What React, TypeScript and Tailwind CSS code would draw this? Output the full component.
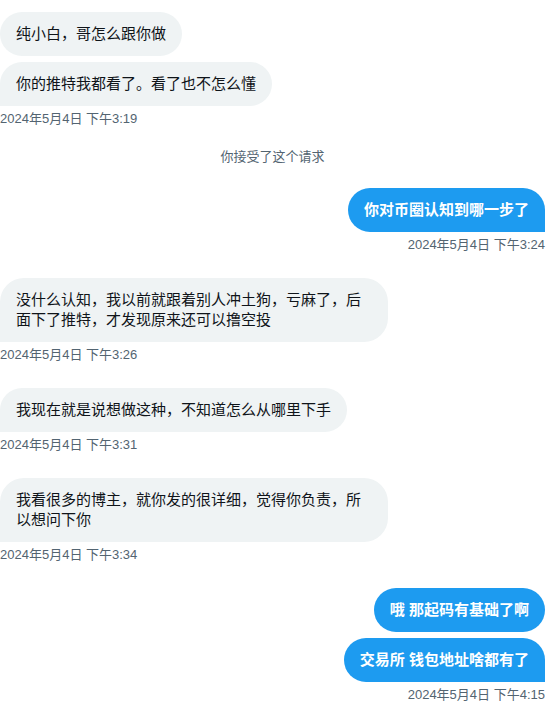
type Msg = { text: string };
type Group =
  | { kind: 'in' | 'out'; msgs: Msg[]; time: string }
  | { kind: 'system'; text: string };

const GROUPS: Group[] = [
  {
    kind: 'in',
    msgs: [{ text: '纯小白，哥怎么跟你做' }, { text: '你的推特我都看了。看了也不怎么懂' }],
    time: '2024年5月4日 下午3:19',
  },
  { kind: 'system', text: '你接受了这个请求' },
  { kind: 'out', msgs: [{ text: '你对币圈认知到哪一步了' }], time: '2024年5月4日 下午3:24' },
  {
    kind: 'in',
    msgs: [{ text: '没什么认知，我以前就跟着别人冲土狗，亏麻了，后面下了推特，才发现原来还可以撸空投' }],
    time: '2024年5月4日 下午3:26',
  },
  { kind: 'in', msgs: [{ text: '我现在就是说想做这种，不知道怎么从哪里下手' }], time: '2024年5月4日 下午3:31' },
  {
    kind: 'in',
    msgs: [{ text: '我看很多的博主，就你发的很详细，觉得你负责，所以想问下你' }],
    time: '2024年5月4日 下午3:34',
  },
  {
    kind: 'out',
    msgs: [{ text: '哦 那起码有基础了啊' }, { text: '交易所 钱包地址啥都有了' }],
    time: '2024年5月4日 下午4:15',
  },
];

function Bubble({ text, out, last }: { text: string; out: boolean; last: boolean }) {
  if (out) {
    return (
      <div
        className={`max-w-[388px] rounded-3xl bg-[#1d9bf0] px-4 py-3 text-[15px] leading-5 font-bold text-white ${
          last ? 'rounded-br-none' : ''
        }`}
      >
        {text}
      </div>
    );
  }
  return (
    <div
      className={`max-w-[388px] rounded-3xl bg-[#eff3f4] px-4 py-3 text-[15px] leading-5 text-[#0f1419] ${
        last ? 'rounded-bl-none' : ''
      }`}
    >
      {text}
    </div>
  );
}

export default function App() {
  return (
    <div
      className="min-h-[706px] w-[550px] bg-white"
      style={{ fontFamily: '"Liberation Sans", "Noto Sans CJK SC", sans-serif' }}
    >
      <div className="flex w-[545px] flex-col pt-3 pb-1">
        {GROUPS.map((g, i) => {
          if (g.kind === 'system') {
            return (
              <div key={i} className="mt-[22px] text-center text-[13px] leading-4 text-[#536471]">
                {g.text}
              </div>
            );
          }
          const out = g.kind === 'out';
          const prev = GROUPS[i - 1];
          const mt = i === 0 ? '' : prev && prev.kind === 'system' ? 'mt-[23px]' : 'mt-[25px]';
          return (
            <div key={i} className={`flex flex-col ${out ? 'items-end' : 'items-start'} ${mt}`}>
              <div className={`flex flex-col gap-1.5 ${out ? 'items-end' : 'items-start'}`}>
                {g.msgs.map((m, j) => (
                  <Bubble key={j} text={m.text} out={out} last={j === g.msgs.length - 1} />
                ))}
              </div>
              <div className="mt-[5px] text-[13px] leading-4 text-[#536471]">{g.time}</div>
            </div>
          );
        })}
      </div>
    </div>
  );
}
